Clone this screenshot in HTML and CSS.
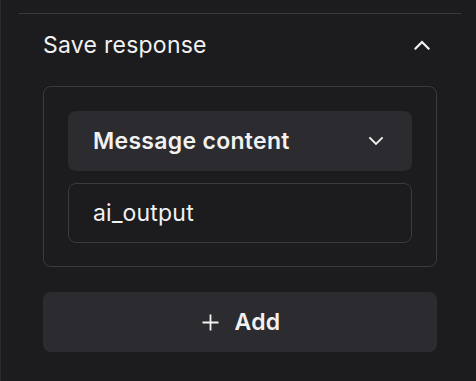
FILE: index.html
```html
<!DOCTYPE html>
<html lang="en">
<head>
<meta charset="utf-8">
<title>Save response</title>
<link rel="stylesheet" href="styles.css">
</head>
<body>
<div class="panel">
  <section class="section">
    <div class="section-header">
      <span class="section-title">Save response</span>
      <svg class="chev" width="16" height="10" viewBox="0 0 16 10" aria-hidden="true"><polyline points="1.5,8.5 8,2 14.5,8.5" fill="none" stroke="#f2f2f2" stroke-width="2.2" stroke-linecap="square"/></svg>
    </div>
    <div class="section-body">
      <div class="box">
        <div class="select">
          <span class="select-label">Message content</span>
          <svg class="chev" width="16" height="10" viewBox="0 0 16 10" aria-hidden="true"><polyline points="2,2 8,8 14,2" fill="none" stroke="#f2f2f2" stroke-width="1.8" stroke-linecap="square"/></svg>
        </div>
        <div class="input">ai_output</div>
      </div>
      <button class="add-btn" type="button">
        <svg width="17" height="17" viewBox="0 0 17 17" aria-hidden="true"><path d="M8.5 0.5v16M0.5 8.5h16" stroke="#f2f2f2" stroke-width="1.8" fill="none"/></svg>
        <span>Add</span>
      </button>
    </div>
  </section>
</div>
</body>
</html>
```

FILE: styles.css
```css
html, body {
  margin: 0;
  padding: 0;
  background: #1c1b1e;
}
body {
  width: 476px;
  height: 381px;
  box-sizing: border-box;
  border-left: 1px solid #2a292d;
  font-family: Inter, "Noto Sans", "Liberation Sans", sans-serif;
  color: #f1f1f2;
  overflow: hidden;
}
.panel {
  padding: 13px 15px 0 18px;
}
.section {
  border-top: 1px solid #3b3a3e;
}
.section-header {
  height: 62px;
  display: flex;
  align-items: center;
  justify-content: space-between;
  padding: 0 31px 0 24px;
}
.section-title {
  font-size: 23px;
  font-weight: 400;
  letter-spacing: 0.25px;
}
.section-body {
  padding: 10px 24px 0 24px;
  display: flex;
  flex-direction: column;
  gap: 25px;
}
.box {
  border: 1px solid #3b3a3e;
  border-radius: 8px;
  padding: 24px 24px 23px 24px;
  display: flex;
  flex-direction: column;
  gap: 12px;
}
.select {
  height: 60px;
  box-sizing: border-box;
  background: #2c2b2f;
  border-radius: 8px;
  display: flex;
  align-items: center;
  justify-content: space-between;
  padding: 0 28px 0 25px;
}
.select-label {
  font-size: 23px;
  font-weight: 600;
  letter-spacing: 0.3px;
}
.input {
  height: 60px;
  box-sizing: border-box;
  border: 1px solid #3b3a3e;
  border-radius: 8px;
  display: flex;
  align-items: center;
  padding: 0 24px;
  font-size: 23px;
  letter-spacing: 0.2px;
}
.add-btn {
  height: 60px;
  border: none;
  border-radius: 8px;
  background: #2c2b2f;
  color: #f1f1f2;
  font-family: inherit;
  font-size: 23px;
  font-weight: 600;
  letter-spacing: 0.3px;
  display: flex;
  align-items: center;
  justify-content: center;
  gap: 16px;
  padding: 0 0 0 2px;
}
```
